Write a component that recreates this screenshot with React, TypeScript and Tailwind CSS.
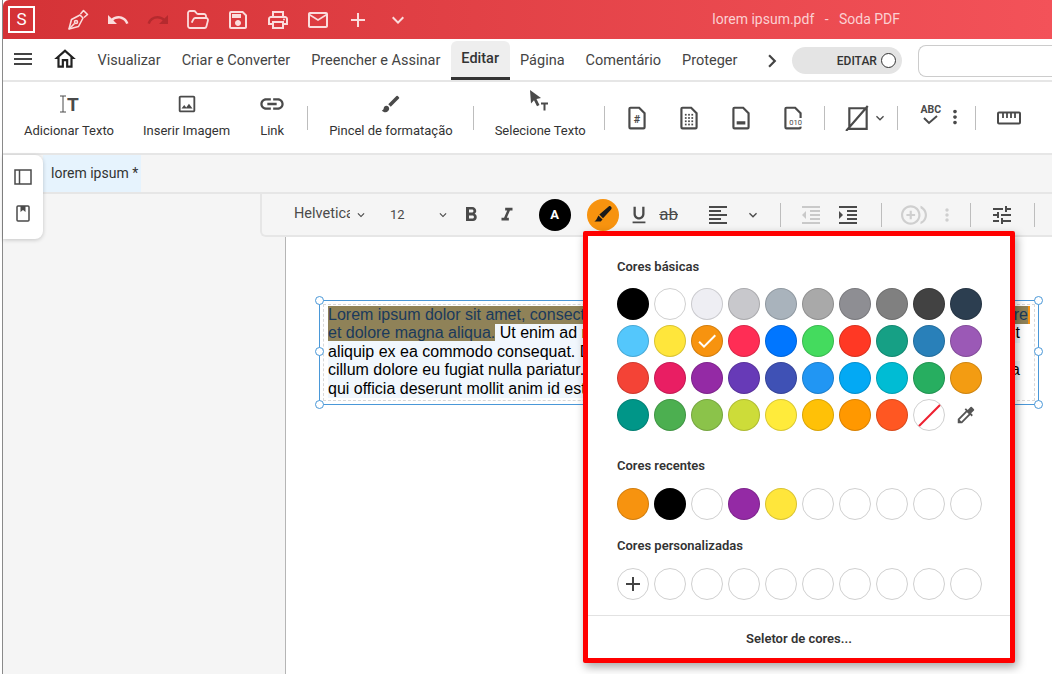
import type { ReactNode } from 'react'
import { FolderOpen } from 'lucide-react'
import {
  MdAdd,
  MdBrush,
  MdCheck,
  MdChevronRight,
  MdColorize,
  MdControlPointDuplicate,
  MdExpandMore,
  MdFormatAlignLeft,
  MdFormatBold,
  MdFormatIndentDecrease,
  MdFormatIndentIncrease,
  MdFormatItalic,
  MdFormatUnderlined,
  MdLink,
  MdMailOutline,
  MdMenu,
  MdMoreVert,
  MdOutlineHome,
  MdOutlineImage,
  MdOutlinePrint,
  MdOutlineSave,
  MdRedo,
  MdTune,
  MdUndo,
} from 'react-icons/md'

const tabs = ['Visualizar', 'Criar e Converter', 'Preencher e Assinar', 'Editar', 'Página', 'Comentário', 'Proteger']

const basicColors = [
  ['#000000', '#ffffff', '#eeeef3', '#c8c8cc', '#a9b3bc', '#a9a9a9', '#8e8e93', '#808080', '#424242', '#2c3e50'],
  ['#54c7fc', '#ffe63b', '#f7930f', '#ff2d55', '#0076ff', '#44db5e', '#ff3824', '#16a085', '#2980b9', '#9b59b6'],
  ['#f44336', '#e91e63', '#942aa5', '#673ab7', '#3f51b5', '#2196f3', '#03a9f4', '#00bcd4', '#27ae60', '#f39c12'],
  ['#009688', '#4caf50', '#8bc34a', '#cddc39', '#ffeb3b', '#ffc107', '#ff9800', '#ff5722'],
]
const recentColors = ['#f7930f', '#000000', '#ffffff', '#942aa5', '#ffe63b', '#ffffff', '#ffffff', '#ffffff', '#ffffff', '#ffffff']

function Swatch({ color, children }: { color: string; children?: ReactNode }) {
  const light = color === '#ffffff'
  return (
    <div
      className={`flex h-8 w-8 items-center justify-center rounded-full border ${light ? 'border-[#d0d0d0]' : 'border-black/15'}`}
      style={{ backgroundColor: color }}
    >
      {children}
    </div>
  )
}

function Sep({ className = '' }: { className?: string }) {
  return <div className={`h-6 w-px shrink-0 bg-[#bdbdbd] ${className}`} />
}

function FileIcon({ children }: { children?: ReactNode }) {
  return (
    <svg width="26" height="26" viewBox="0 0 24 24" fill="none" stroke="#4a4a4a" strokeWidth="2">
      <path d="M6 2.5h8l5 5V20.500a1 1 0 0 1-1 1H6a1 1 0 0 1-1-1v-17a1 1 0 0 1 1-1z" />
      {children}
    </svg>
  )
}

function ToolItem({ icon, label, className = '' }: { icon: ReactNode; label: string; className?: string }) {
  return (
    <div className={`flex shrink-0 flex-col items-center ${className}`}>
      <div className="flex h-6 items-center justify-center">{icon}</div>
      <span className="mt-[6px] text-[13px] leading-[18px] text-[#333]">{label}</span>
    </div>
  )
}

function TitleBar() {
  const cls = 'flex w-10 shrink-0 justify-center text-[#fbdcdc]'
  return (
    <div className="flex h-[39px] shrink-0 items-center rounded-tl-md bg-gradient-to-r from-[#d43236] to-[#f35259]">
      <div className="ml-[5px] flex h-[27px] w-[27px] items-center justify-center border-2 border-white text-[17px] leading-none text-white">
        S
      </div>
      <div className="ml-[23px] flex items-center">
        <div className={cls}>
          <svg width="24" height="24" viewBox="0 0 24 24" fill="none" stroke="currentColor" strokeWidth="1.6" strokeLinejoin="round">
            <path d="M3 21l2.500-9.500L14 7l3 3-4.500 8.500z" />
            <path d="M14.500 6l3-3.500 4 4L18 9.500" />
            <path d="M3 21l5.500-5.500" />
            <circle cx="10" cy="14" r="1.500" />
          </svg>
        </div>
        <div className={cls}><MdUndo size={24} /></div>
        <div className="flex w-10 shrink-0 justify-center text-[#b52a2e]"><MdRedo size={24} /></div>
        <div className={cls}><FolderOpen size={24} strokeWidth={1.8} /></div>
        <div className={cls}><MdOutlineSave size={24} /></div>
        <div className={cls}><MdOutlinePrint size={24} /></div>
        <div className={cls}><MdMailOutline size={24} /></div>
        <div className={cls}><MdAdd size={24} /></div>
        <div className={cls}><MdExpandMore size={24} /></div>
      </div>
      <div className="ml-auto mr-[152px] whitespace-pre text-[14px] text-[#fbd0d2]">lorem ipsum.pdf   -   Soda PDF</div>
    </div>
  )
}

function MenuBar() {
  return (
    <div className="flex h-[43px] shrink-0 items-end border-b-2 border-[#e6e6e6] text-[#444]">
      <div className="mb-[8px] ml-[8px] flex items-center self-end">
        <MdMenu size={24} className="text-[#444]" />
        <MdOutlineHome size={26} className="ml-[17px] text-[#222]" />
      </div>
      <div className="ml-[9px] flex h-full items-end">
        {tabs.map((tab) =>
          tab === 'Editar' ? (
            <div
              key={tab}
              className="mt-[2px] flex h-[39px] items-center rounded-t-md border-b-[3px] border-[#333] bg-[#eeeeee] px-[10.5px] text-[14.500px] font-medium text-[#333]"
            >
              {tab}
            </div>
          ) : (
            <div key={tab} className="flex h-[39px] items-center px-[10.5px] text-[14.500px]">
              {tab}
            </div>
          ),
        )}
      </div>
      <MdChevronRight size={26} className="mb-[6px] ml-[11px] text-[#444]" />
      <div className="mb-[6px] ml-[7px] flex h-[27px] w-[110px] items-center justify-end rounded-full bg-[#e4e4e4] pr-[6px]">
        <span className="text-[12px] font-medium text-[#333]">EDITAR</span>
        <span className="ml-[4px] h-[15px] w-[15px] rounded-full border border-[#333] bg-white" />
      </div>
      <div className="mb-[3px] ml-[16px] h-[32px] flex-1 rounded-l-lg border border-r-0 border-[#cccccc] bg-white" />
    </div>
  )
}

function ToolBar() {
  return (
    <div className="flex h-[71px] shrink-0 items-start pt-[10px]">
      <ToolItem
        className="ml-[21px]"
        label="Adicionar Texto"
        icon={
          <span className="flex items-center">
            <svg width="8" height="18" viewBox="0 0 8 18" fill="none" stroke="#4a4a4a" strokeWidth="1">
              <path d="M1 1h6M4 1v16M1 17h6" />
            </svg>
            <span className="text-[19px] font-bold leading-none text-[#4a4a4a]">T</span>
          </span>
        }
      />
      <ToolItem className="ml-[29px]" label="Inserir Imagem" icon={<MdOutlineImage size={22} className="text-[#4a4a4a]" />} />
      <ToolItem className="ml-[28px]" label="Link" icon={<MdLink size={28} className="text-[#4a4a4a]" />} />
      <Sep className="ml-[21px] mt-[14px]" />
      <ToolItem className="ml-[21px]" label="Pincel de formatação" icon={<MdBrush size={22} className="text-[#4a4a4a]" />} />
      <Sep className="ml-[20px] mt-[14px]" />
      <ToolItem
        className="ml-[21px]"
        label="Selecione Texto"
        icon={
          <svg width="22" height="24" viewBox="0 0 22 24" fill="#4a4a4a" className="ml-[-2px] mt-[-6px]">
            <path d="M2 1l11 8-4.500 1 3 6-2.500 1.200-3-6L3 14.500z" />
            <path d="M13 13.500h7v2h-2.500v6h-2v-6H13z" />
          </svg>
        }
      />
      <Sep className="ml-[18px] mt-[14px]" />
      <div className="ml-[19px] mt-[13px] flex w-[26px] justify-center">
        <FileIcon>
          <text x="12" y="16.500" fontSize="10" fontWeight="700" textAnchor="middle" fill="#4a4a4a" stroke="none" fontFamily="Roboto">#</text>
        </FileIcon>
      </div>
      <div className="ml-[26px] mt-[13px] flex w-[26px] justify-center">
        <FileIcon>
          <g fill="#4a4a4a" stroke="none">
            {[9, 12, 15].map((x) => [9, 12, 15, 18].map((y) => <rect key={`${x}-${y}`} x={x - 0.8} y={y - 0.8} width="1.600" height="1.600" />))}
          </g>
        </FileIcon>
      </div>
      <div className="ml-[26px] mt-[13px] flex w-[26px] justify-center">
        <FileIcon>
          <rect x="8" y="15" width="8" height="3" fill="#4a4a4a" stroke="none" />
        </FileIcon>
      </div>
      <div className="ml-[26px] mt-[13px] flex w-[26px] justify-center">
        <FileIcon>
          <rect x="7" y="12" width="15" height="8" fill="white" stroke="none" />
          <text x="14.500" y="18.500" fontSize="7" textAnchor="middle" fill="#4a4a4a" stroke="none" fontFamily="Roboto">010</text>
        </FileIcon>
      </div>
      <Sep className="ml-[18px] mt-[14px]" />
      <div className="ml-[20px] mt-[13px] flex items-center">
        <svg width="26" height="26" viewBox="0 0 24 24" fill="none" stroke="#4a4a4a" strokeWidth="2">
          <path d="M4 3h16v19H4zM1 24L21 1" />
        </svg>
        <MdExpandMore size={16} className="ml-[1px] text-[#4a4a4a]" />
      </div>
      <Sep className="ml-[9px] mt-[14px]" />
      <div className="ml-[22px] mt-[12px] flex w-[22px] flex-col items-center">
        <span className="text-[10.500px] font-bold leading-[11px] text-[#4a4a4a]">ABC</span>
        <svg width="15" height="10" viewBox="0 0 15 10" fill="none" stroke="#4a4a4a" strokeWidth="2">
          <path d="M1 3l5 5 8-7" />
        </svg>
      </div>
      <MdMoreVert size={22} className="ml-[2px] mt-[14px] text-[#4a4a4a]" />
      <Sep className="ml-[9px] mt-[14px]" />
      <svg width="24" height="14" viewBox="0 0 24 14" fill="none" stroke="#4a4a4a" className="ml-[21px] mt-[19px]">
        <rect x="1" y="1.500" width="22" height="11" rx="1" strokeWidth="2" />
        <path d="M6 2v5M10 2v5M14 2v5M18 2v5" strokeWidth="1.800" />
      </svg>
    </div>
  )
}

function FormatBar() {
  return (
    <div className="ml-[257px] flex h-[43px] items-center rounded-bl-md border-b-2 border-l-2 border-[#e6e6e6] bg-[#f5f5f5] text-[#4a4a4a]">
      <span className="ml-[32px] w-[56px] overflow-hidden text-[14.500px] leading-none">Helvetica</span>
      <MdExpandMore size={14} className="ml-[4px]" />
      <span className="ml-[22px] text-[13px]">12</span>
      <MdExpandMore size={14} className="ml-[31px]" />
      <MdFormatBold size={24} className="ml-[9px]" />
      <MdFormatItalic size={22} className="ml-[13px]" />
      <div className="ml-[21px] flex h-8 w-8 items-center justify-center rounded-full bg-black text-[13px] font-bold text-white">A</div>
      <div className="ml-[16px] flex h-8 w-8 items-center justify-center rounded-full bg-[#f7930f]">
        <svg width="22" height="22" viewBox="0 0 24 24" fill="#1a1a1a">
          <path d="M18.500 2.500c1.500-.8 3.500 1.200 2.800 2.800-.3.500-.8 1-1.200 1.500L12 15.500 8 11.500z" />
          <path d="M7 12.500l4.500 4.500-2 2H2.500c1-.5 2.500-2 3-3.500z" />
        </svg>
      </div>
      <MdFormatUnderlined size={22} className="ml-[9px]" />
      <span className="ml-[7px] w-[24px] text-center text-[17px] leading-none line-through">ab</span>
      <MdFormatAlignLeft size={24} className="ml-[25px]" />
      <MdExpandMore size={16} className="ml-[15px]" />
      <Sep className="ml-[19px]" />
      <MdFormatIndentDecrease size={24} className="ml-[18px] text-[#c9c9c9]" />
      <MdFormatIndentIncrease size={24} className="ml-[13px]" />
      <Sep className="ml-[21px]" />
      <MdControlPointDuplicate size={26} className="ml-[19px] -scale-x-100 text-[#cfcfcf]" />
      <MdMoreVert size={20} className="ml-[10px] text-[#cfcfcf]" />
      <Sep className="ml-[13px]" />
      <MdTune size={24} className="ml-[19px]" />
      <Sep className="ml-[20px]" />
    </div>
  )
}

function Handle({ className }: { className: string }) {
  return <span className={`absolute h-[9px] w-[9px] rounded-full border border-[#4a98d8] bg-white ${className}`} />
}

function TextBox() {
  const hi = 'bg-[#8f8258] text-[#1a3a5c]'
  return (
    <div className="absolute left-[33px] top-[63px] h-[105px] w-[720px] border border-[#4a98d8] [font-family:'Liberation_Sans',Arial,sans-serif]">
      <div className="absolute inset-[3px] border border-dashed border-[#d8d8d8]" />
      <div className="absolute left-[8px] top-[5px] whitespace-pre text-[16px] leading-[18.4px] text-black">
        <div className={`w-fit border-r-2 border-[#f7930f] ${hi}`}>
          Lorem ipsum dolor sit amet, consectetur adipiscing elit, sed do eiusmod tempor incididunt ut labore
        </div>
        <div className="w-fit bg-[#f1f7fd]">
          <span className={hi}>et dolore magna aliqua.</span> Ut enim ad minim veniam, quis nostrud exercitation ullamco laboris nisi ut
        </div>
        <div className="w-fit bg-[#f1f7fd]">aliquip ex ea commodo consequat. Duis aute irure dolor in reprehenderit in voluptate velit esse</div>
        <div className="w-fit bg-[#f1f7fd]">cillum dolore eu fugiat nulla pariatur. Excepteur sint occaecat cupidatat non proident, sunt in culpa</div>
        <div className="w-fit bg-[#f1f7fd]">qui officia deserunt mollit anim id est laborum.</div>
      </div>
      <Handle className="-left-[5px] -top-[5px]" />
      <Handle className="-left-[5px] top-[46px]" />
      <Handle className="-bottom-[5px] -left-[5px]" />
      <Handle className="-right-[5px] -top-[5px]" />
      <Handle className="-right-[5px] top-[46px]" />
      <Handle className="-bottom-[5px] -right-[5px]" />
    </div>
  )
}

function ColorPopup() {
  const heading = 'text-[13px] font-semibold leading-4 text-[#333]'
  return (
    <div className="absolute left-[583px] top-[231px] flex h-[432px] w-[432px] flex-col rounded-[2px] border-[5px] border-[#ff0000] bg-white shadow-[2px_4px_10px_rgba(0,0,0,0.35)]">
      <div className="flex-1 pl-[29px] pt-[23px]">
        <div className={heading}>Cores básicas</div>
        <div className="mt-[13px] flex flex-col gap-[5px]">
          {basicColors.map((row, r) => (
            <div key={r} className="flex gap-[5px]">
              {row.map((color, c) => (
                <Swatch key={c} color={color}>
                  {color === '#f7930f' && <MdCheck size={24} className="text-white" />}
                </Swatch>
              ))}
              {r === 3 && (
                <>
                  <div className="relative h-8 w-8 overflow-hidden rounded-full border border-[#d0d0d0] bg-white">
                    <div className="absolute left-[-3px] top-[14px] h-[2px] w-[38px] -rotate-45 bg-[#ee2030]" />
                  </div>
                  <div className="flex h-8 w-8 items-center justify-center">
                    <MdColorize size={22} className="text-[#555]" />
                  </div>
                </>
              )}
            </div>
          ))}
        </div>
        <div className={`mt-[27px] ${heading}`}>Cores recentes</div>
        <div className="mt-[14px] flex gap-[5px]">
          {recentColors.map((color, i) => (
            <Swatch key={i} color={color} />
          ))}
        </div>
        <div className={`mt-[18px] ${heading}`}>Cores personalizadas</div>
        <div className="mt-[14px] flex gap-[5px]">
          <Swatch color="#ffffff">
            <MdAdd size={24} className="text-[#444]" />
          </Swatch>
          {Array.from({ length: 9 }, (_, i) => (
            <Swatch key={i} color="#ffffff" />
          ))}
        </div>
      </div>
      <div className="flex h-[43px] items-center justify-center border-t border-[#e2e2e2] pt-[4px] text-[13px] font-semibold text-[#333]">
        Seletor de cores...
      </div>
    </div>
  )
}

export default function App() {
  return (
    <div className="relative h-[674px] w-[1052px] overflow-hidden bg-white [font-family:Roboto,sans-serif]">
      <div className="ml-[2px] flex h-full flex-col border-l border-[#8a8a8a]">
        <TitleBar />
        <MenuBar />
        <ToolBar />
        <div className="flex h-[41px] shrink-0 border-b-2 border-t-2 border-[#e6e6e6] bg-[#f5f5f5]">
          <div className="ml-[40px] flex w-[98px] items-center bg-[#e6f3fd] pl-[8px] text-[14px] text-[#333]">lorem ipsum *</div>
        </div>
        <div className="flex min-h-0 flex-1 flex-col bg-[#f5f5f5]">
          <FormatBar />
          <div className="relative ml-[282px] flex-1 border-l border-[#b5b5b5] bg-white">
            <TextBox />
          </div>
        </div>
      </div>
      <div className="absolute left-[3px] top-[155px] flex h-[84px] w-[40px] flex-col items-center gap-[20px] rounded-r-lg bg-white pt-[14px] shadow-[0_1px_4px_rgba(0,0,0,0.2)]">
        <svg width="18" height="16" viewBox="0 0 18 16" fill="none" stroke="#4a4a4a" strokeWidth="1.500">
          <rect x="1" y="1" width="16" height="14" />
          <path d="M5.500 1v14" />
        </svg>
        <svg width="14" height="17" viewBox="0 0 14 17" fill="none" stroke="#4a4a4a" strokeWidth="1.500">
          <rect x="1" y="1" width="12" height="15" rx="1" />
          <path d="M4.500 1v6l2.500-2 2.500 2V1" fill="#4a4a4a" stroke="none" />
        </svg>
      </div>
      <ColorPopup />
    </div>
  )
}
